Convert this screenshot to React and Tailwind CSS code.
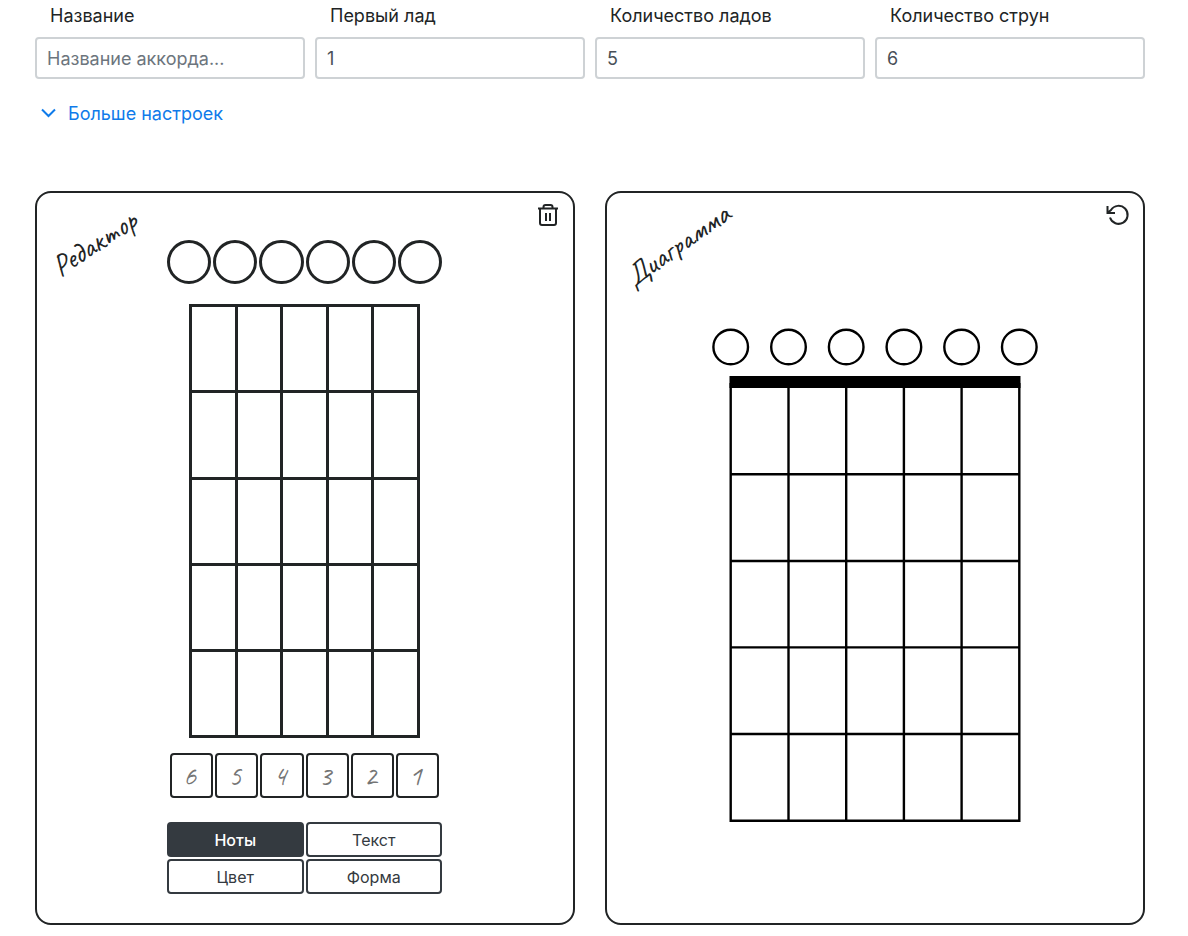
import React, { useState } from "react";

const settings = [
  { id: "title", label: "Название", placeholder: "Название аккорда...", value: "" },
  { id: "first-fret", label: "Первый лад", value: "1" },
  { id: "fret-count", label: "Количество ладов", value: "5" },
  { id: "string-count", label: "Количество струн", value: "6" },
];
const strings = [6, 5, 4, 3, 2, 1];
const cells = Array.from({ length: 25 }, (_, i) => i);
const modes = ["Ноты", "Текст", "Цвет", "Форма"];
const stringX = [123.7, 181.5, 239.2, 296.9, 354.6, 412.3];
const fretY = [281.3, 368, 454.4, 541, 627.8];

function Editor() {
  const [mode, setMode] = useState("Ноты");
  return (
    <section className="relative flex flex-col items-center rounded-2xl border-2 border-[#212425] pt-[47px] pr-px pb-[29px]">
      <h2 className="absolute top-[34px] left-[10px] -rotate-[33deg] font-[Caveat,'Open_Sans',sans-serif] text-[30px] leading-8 font-medium">
        Редактор
      </h2>
      <button type="button" aria-label="Очистить" className="absolute top-[10px] right-[13px]">
        <svg width="24" height="24" viewBox="0 0 24 24" fill="none" stroke="currentColor" strokeWidth="2" strokeLinejoin="round">
          <path d="M2 5.500h20M4 5.500v14.500a2 2 0 0 0 2 2h12a2 2 0 0 0 2-2V5.500M7.500 5.500V4a2 2 0 0 1 2-2h5a2 2 0 0 1 2 2v1.500M10 10v8M14 10v8" />
        </svg>
      </button>

      <div className="grid w-[275px] grid-cols-6 gap-0.5">
        {strings.map((s) => (
          <button key={s} type="button" aria-label={`Струна ${s}`} className="aspect-square rounded-full border-3 border-[#212425]" />
        ))}
      </div>

      <div className="mt-5 grid h-[434px] w-[231px] grid-cols-5 grid-rows-5 gap-[3px] bg-[#212425] p-[3px]">
        {cells.map((c) => (
          <button key={c} type="button" aria-label={`Клетка ${c + 1}`} className="bg-white" />
        ))}
      </div>

      <div className="mt-[15px] grid w-[269px] grid-cols-6 gap-0.5">
        {strings.map((s) => (
          <input
            key={s}
            aria-label={`Подпись струны ${s}`}
            placeholder={String(s)}
            className="h-[45px] w-full min-w-0 rounded-sm border-2 border-[#212425] pr-1 text-center font-[Caveat,'Open_Sans',sans-serif] text-[28px] placeholder:text-[#757575]"
          />
        ))}
      </div>

      <div className="mt-6 grid w-[275px] grid-cols-2 gap-0.5">
        {modes.map((m) => (
          <button
            key={m}
            type="button"
            aria-pressed={m === mode}
            onClick={() => setMode(m)}
            className={
              m === mode
                ? "h-[35px] rounded-sm border-2 border-[#343a40] bg-[#343a40] text-base font-medium text-white"
                : "h-[35px] rounded-sm border-2 border-[#343a40] text-base text-[#343a40]"
            }
          >
            {m}
          </button>
        ))}
      </div>
    </section>
  );
}

function Diagram() {
  return (
    <section className="relative rounded-2xl border-2 border-[#212425]">
      <h2 className="absolute top-[36px] left-[10px] -rotate-[35deg] font-[Caveat,'Open_Sans',sans-serif] text-[30px] leading-8 font-medium">
        Диаграмма
      </h2>
      <button type="button" aria-label="Сбросить" className="absolute top-[10px] right-[13px]">
        <svg width="24" height="24" viewBox="0 0 24 24" fill="none" stroke="currentColor" strokeWidth="2">
          <path d="M4 14.500A9 9 0 1 0 5 7L2 9.500M1.500 3v7h7.500" />
        </svg>
      </button>
      <svg className="block w-full" viewBox="0 0 536 730" fill="none" stroke="#000" strokeWidth="2.400" role="img" aria-label="Диаграмма аккорда">
        {stringX.map((x) => (
          <g key={x}>
            <circle cx={x} cy="154" r="17.300" />
            <path d={`M${x} 190V628.900`} />
          </g>
        ))}
        <path d="M122.500 189H413.500" strokeWidth="11.800" />
        {fretY.map((y) => (
          <path key={y} d={`M123.700 ${y}H412.300`} />
        ))}
      </svg>
    </section>
  );
}

export default function App() {
  return (
    <main className="bg-white pt-0.5 pr-[43px] pb-3 pl-[35px] font-[Inter,sans-serif] text-[#212425]">
      <form className="grid grid-cols-4 gap-[10px] text-lg">
        {settings.map((f) => (
          <div key={f.id} className="flex flex-col gap-2">
            <label htmlFor={f.id} className="pl-[15px] leading-[27px]">
              {f.label}
            </label>
            <input
              id={f.id}
              defaultValue={f.value}
              placeholder={f.placeholder}
              className="h-[42px] w-full rounded border-2 border-[#ced2d5] px-[10px] text-[#495057] placeholder:text-[#6c757d]"
            />
          </div>
        ))}
      </form>

      <button type="button" className="mt-[21px] flex h-7 items-center gap-3 pl-1.5 text-lg text-[#0f7bea]">
        <svg width="15" height="12" viewBox="0 0 15 12" fill="none" stroke="currentColor" strokeWidth="2" aria-hidden="true">
          <path d="M1 1.500l6.500 6.500L14 1.500" />
        </svg>
        Больше настроек
      </button>

      <div className="mt-[63px] grid grid-cols-2 gap-[30px]">
        <Editor />
        <Diagram />
      </div>
    </main>
  );
}
